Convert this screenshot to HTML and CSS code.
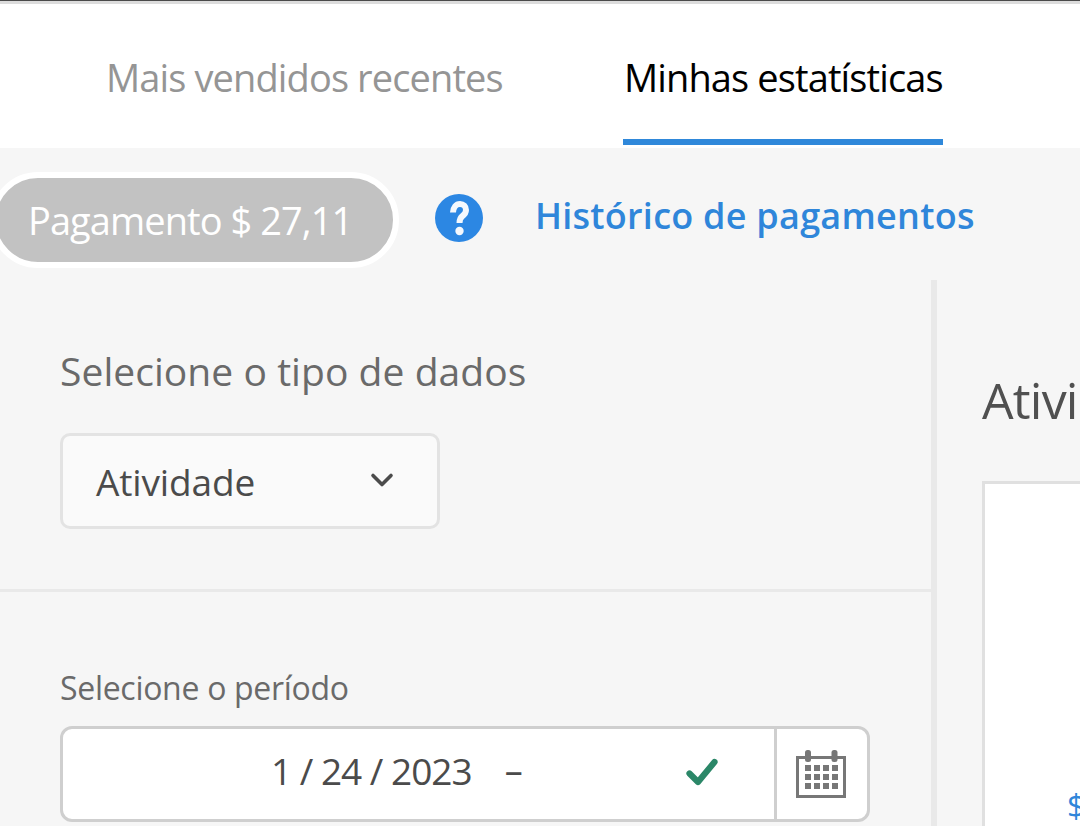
FILE: index.html
```html
<!DOCTYPE html>
<html lang="pt">
<head>
<meta charset="utf-8">
<title>Minhas estatísticas</title>
<link rel="stylesheet" href="styles.css">
</head>
<body>
<div class="page">
  <header class="tabs">
    <a class="tab">Mais vendidos recentes</a>
    <a class="tab tab-active">Minhas estatísticas</a>
  </header>
  <main class="content">
    <div class="payment-row">
      <div class="pill">Pagamento $ 27,11</div>
      <svg class="help" viewBox="0 0 48 48" aria-hidden="true">
        <circle cx="24" cy="24" r="24" fill="#2c87e3"/>
        <path d="M18 18.500c.2-5 3-8.500 7-8.500 3.500 0 6 2.500 6 6 0 3-1.500 4.500-3.500 6-1.800 1.300-3 2.500-3 7" fill="none" stroke="#f4f8fd" stroke-width="6" stroke-linecap="butt"/>
        <circle cx="24.500" cy="37" r="4.200" fill="#f4f8fd"/>
      </svg>
      <a class="history">Histórico de pagamentos</a>
    </div>
    <div class="columns">
      <aside class="sidebar">
        <section class="type-section">
          <h2 class="type-title">Selecione o tipo de dados</h2>
          <div class="select">
            <span>Atividade</span>
            <svg class="chevron" viewBox="0 0 24 16" aria-hidden="true">
              <path d="M3 3.500 12 12.500 21 3.500" fill="none" stroke="#4b4b4b" stroke-width="3.600" stroke-linecap="round" stroke-linejoin="round"/>
            </svg>
          </div>
        </section>
        <section class="period-section">
          <h3 class="period-title">Selecione o período</h3>
          <div class="date-box">
            <div class="date-field">
              <span class="date-text">1 / 24 / 2023</span>
              <span class="date-dash">–</span>
              <svg class="check" viewBox="0 0 32 28" aria-hidden="true">
                <path d="M3.500 15.500 12 24 28.500 4" fill="none" stroke="#2b8768" stroke-width="6.200" stroke-linecap="round" stroke-linejoin="round"/>
              </svg>
            </div>
            <div class="date-icon">
              <svg class="calendar" viewBox="0 0 50 48" aria-hidden="true">
                <rect x="1.500" y="7.500" width="47" height="39" fill="none" stroke="#777" stroke-width="3"/>
                <rect x="9" y="0" width="6" height="12" rx="2.500" fill="#777"/>
                <rect x="35.500" y="0" width="6" height="12" rx="2.500" fill="#777"/>
                <path d="M9 15h6v6H9zM18 15h6v6h-6zM27 15h6v6h-6zM36 15h6v6h-6zM9 24h6v6H9zM18 24h6v6h-6zM27 24h6v6h-6zM36 24h6v6h-6zM9 33h6v6H9zM18 33h6v6h-6zM27 33h6v6h-6zM36 33h6v6h-6z" fill="#777"/>
              </svg>
            </div>
          </div>
        </section>
      </aside>
      <section class="report">
        <h2 class="report-title">Atividade</h2>
        <div class="chart">
          <span class="axis-label">$</span>
        </div>
      </section>
    </div>
  </main>
</div>
</body>
</html>
```

FILE: styles.css
```css
html, body {
  margin: 0;
  padding: 0;
  width: 1080px;
  height: 826px;
  overflow: hidden;
  background: #f6f6f6;
}
.page {
  width: 1080px;
  height: 826px;
  overflow: hidden;
  font-family: "Open Sans", "Noto Sans", sans-serif;
  display: flex;
  flex-direction: column;
}
.tabs {
  height: 145px;
  box-sizing: border-box;
  padding: 3px 0 0 106px;
  background: linear-gradient(#4a4a4a 0 1px, #dcdcdc 1px 4px, #fff 4px);
  display: flex;
  box-shadow: 0 3px 0 #fff;
}
.tab {
  width: 517px;
  flex: none;
  height: 142px;
  box-sizing: border-box;
  padding-top: 49px;
  font-size: 38px;
  line-height: 50px;
  letter-spacing: -0.88px;
  color: #959595;
  white-space: nowrap;
}
.tab-active {
  width: 320px;
  color: #000;
  border-bottom: 6px solid #2f88da;
  padding-left: 1px;
}
.content {
  flex: 1;
  display: flex;
  flex-direction: column;
  margin-top: 3px;
  min-height: 0;
}
.payment-row {
  height: 132px;
  box-sizing: border-box;
  padding-top: 24px;
  display: flex;
  align-items: flex-start;
}
.pill {
  margin-left: -10px;
  width: 409px;
  height: 96px;
  box-sizing: border-box;
  border: 6px solid #fff;
  border-radius: 48px;
  background: #c2c2c2;
  color: #fff;
  font-size: 38px;
  line-height: 84px;
  letter-spacing: -0.93px;
  padding-left: 32px;
  white-space: nowrap;
}
.help {
  width: 48px;
  height: 48px;
  margin: 22px 0 0 36px;
  flex: none;
}
.history {
  margin: 19px 0 0 52px;
  font-size: 36px;
  line-height: 50px;
  font-weight: 600;
  letter-spacing: 0.25px;
  color: #2f86da;
  white-space: nowrap;
}
.columns {
  flex: 1;
  display: flex;
  min-height: 0;
}
.sidebar {
  width: 937px;
  flex: none;
  box-sizing: border-box;
  border-right: 6px solid #e9e9e9;
}
.type-section {
  height: 312px;
  box-sizing: border-box;
  padding: 62px 0 0 60px;
  border-bottom: 3px solid #e9e9e9;
}
.type-title {
  margin: 0 0 33px;
  font-size: 39px;
  line-height: 58px;
  font-weight: 400;
  letter-spacing: 0.05px;
  color: #6a6a6a;
  white-space: nowrap;
}
.select {
  width: 380px;
  height: 96px;
  box-sizing: border-box;
  border: 3px solid #e3e3e3;
  border-radius: 10px;
  background: #fafafa;
  display: flex;
  align-items: center;
  justify-content: space-between;
  padding: 0 43px 0 33px;
  font-size: 37px;
  letter-spacing: -0.15px;
  color: #4b4b4b;
}
.chevron {
  width: 24px;
  height: 16px;
  margin-bottom: 3px;
}
.period-section {
  padding: 72px 0 0 60px;
}
.period-title {
  margin: 0 0 14px;
  font-size: 32px;
  line-height: 48px;
  font-weight: 400;
  letter-spacing: -0.3px;
  color: #6a6a6a;
  white-space: nowrap;
}
.date-box {
  width: 810px;
  height: 96px;
  box-sizing: border-box;
  border: 3px solid #cfcfcf;
  border-radius: 12px;
  background: #fff;
  display: flex;
}
.date-field {
  width: 714px;
  flex: none;
  box-sizing: border-box;
  border-right: 3px solid #cfcfcf;
  display: flex;
  align-items: center;
  padding-left: 208px;
  padding-bottom: 8px;
  font-size: 37px;
  letter-spacing: -1px;
  color: #4b4b4b;
  white-space: nowrap;
}
.date-dash {
  margin-left: 33px;
  font-size: 36px;
}
.check {
  width: 32px;
  height: 28px;
  margin: 4px 0 0 164px;
}
.date-icon {
  flex: 1;
  display: flex;
  align-items: center;
  justify-content: center;
}
.calendar {
  width: 50px;
  height: 48px;
  margin-right: 2px;
}
.report {
  padding: 89px 0 0 45px;
  width: 500px;
  flex: none;
}
.report-title {
  margin: 0 0 50px;
  font-size: 50px;
  line-height: 62px;
  font-weight: 400;
  letter-spacing: -0.8px;
  color: #505050;
  white-space: nowrap;
}
.chart {
  height: 420px;
  box-sizing: border-box;
  border: 3px solid #e0e0e0;
  background: #fff;
  padding: 302px 0 0 82px;
}
.axis-label {
  font-size: 32px;
  line-height: 40px;
  color: #2f86da;
}
```
